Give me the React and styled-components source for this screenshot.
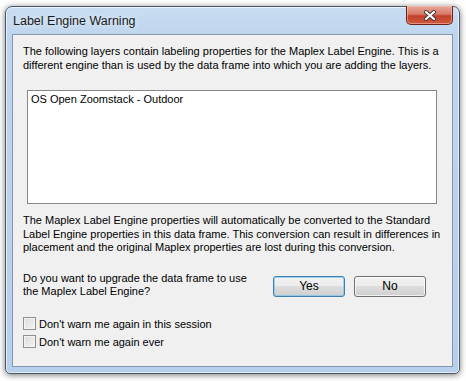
import styled, { createGlobalStyle } from "styled-components";

const GlobalStyle = createGlobalStyle`
  body {
    margin: 0;
    background: #ffffff;
    font-family: "Liberation Sans", Arial, sans-serif;
  }
`;

export default function App() {
  return (
    <>
      <GlobalStyle />
      <Page>
        <Window>
          <TitleBar>
            <Title>Label Engine Warning</Title>
            <CloseButton>
              <svg width="14" height="11" viewBox="0 0 14 11">
                <path
                  d="M3 2 L11 9 M11 2 L3 9"
                  stroke="#3b3b3b"
                  strokeWidth="4"
                  strokeLinecap="round"
                />
                <path
                  d="M3 2 L11 9 M11 2 L3 9"
                  stroke="#ffffff"
                  strokeWidth="2.2"
                  strokeLinecap="round"
                />
              </svg>
            </CloseButton>
          </TitleBar>

          <Client>
            <Message>
              The following layers contain labeling properties for the Maplex Label Engine. This is a
              <br />
              different engine than is used by the data frame into which you are adding the layers.
            </Message>

            <LayerList>
              <LayerItem>OS Open Zoomstack - Outdoor</LayerItem>
            </LayerList>

            <Message>
              The Maplex Label Engine properties will automatically be converted to the Standard
              <br />
              Label Engine properties in this data frame. This conversion can result in differences in
              <br />
              placement and the original Maplex properties are lost during this conversion.
            </Message>

            <QuestionRow>
              <Message>
                Do you want to upgrade the data frame to use
                <br />
                the Maplex Label Engine?
              </Message>
              <Buttons>
                <Button $default>Yes</Button>
                <Button>No</Button>
              </Buttons>
            </QuestionRow>

            <Checks>
              <CheckRow>
                <CheckBox />
                Don't warn me again in this session
              </CheckRow>
              <CheckRow>
                <CheckBox />
                Don't warn me again ever
              </CheckRow>
            </Checks>
          </Client>
        </Window>
      </Page>
    </>
  );
}

const Page = styled.div`
  width: 466px;
  height: 381px;
  padding: 6px 0 0 5px;
  box-sizing: border-box;
`;

const Window = styled.div`
  width: 455px;
  height: 368px;
  box-sizing: border-box;
  display: flex;
  flex-direction: column;
  padding: 0 6px 6px 6px;
  border: 1px solid #4a5868;
  border-radius: 7px 7px 5px 5px;
  background: linear-gradient(
    to bottom,
    #c9ddf2 0px,
    #bed5ee 30px,
    #b6cfea 100%
  );
  box-shadow: 0 1px 6px rgba(0, 0, 0, 0.55), inset 0 0 0 1px rgba(255, 255, 255, 0.6);
`;

const TitleBar = styled.div`
  height: 27px;
  display: flex;
  justify-content: space-between;
  align-items: flex-start;
  padding-left: 1px;
`;

const Title = styled.div`
  font-size: 12.5px;
  color: #1a1a1a;
  line-height: 28px;
  text-shadow: 0 0 6px rgba(255, 255, 255, 0.9);
`;

const CloseButton = styled.div`
  width: 47px;
  height: 19px;
  box-sizing: border-box;
  margin-top: -1px;
  display: flex;
  align-items: center;
  justify-content: center;
  border: 1px solid #6b2419;
  border-top: none;
  border-radius: 0 0 5px 5px;
  background: linear-gradient(
    to bottom,
    #e9a899 0%,
    #d97b68 45%,
    #c2402a 55%,
    #cf5a3d 100%
  );
  box-shadow: inset 0 0 0 1px rgba(255, 200, 190, 0.5);
`;

const Client = styled.div`
  flex: 1;
  display: flex;
  flex-direction: column;
  background: #f0f0f0;
  border: 1px solid #8497b0;
  padding: 10px 15px 0 10px;
  font-size: 11px;
  color: #000;
`;

const Message = styled.div`
  line-height: 13.5px;
  white-space: nowrap;
`;

const LayerList = styled.div`
  margin: 18px 0 10px 4px;
  height: 114px;
  box-sizing: border-box;
  background: #fff;
  border: 1px solid #828790;
  padding: 2px 3px;
`;

const LayerItem = styled.div`
  line-height: 13.5px;
`;

const QuestionRow = styled.div`
  margin-top: 17px;
  display: flex;
  align-items: flex-start;
`;

const Buttons = styled.div`
  margin-left: auto;
  margin-right: 11px;
  margin-top: 4px;
  display: flex;
  gap: 9px;
`;

const Button = styled.div`
  width: 72px;
  height: 21px;
  box-sizing: border-box;
  display: flex;
  align-items: center;
  justify-content: center;
  font-size: 12px;
  border-radius: 3px;
  border: 1px solid ${(p) => (p.$default ? "#3c7fb1" : "#707070")};
  background: linear-gradient(
    to bottom,
    #f2f2f2 0%,
    #ebebeb 50%,
    #dddddd 50%,
    #cfcfcf 100%
  );
  box-shadow: inset 0 0 0 1px
    ${(p) => (p.$default ? "rgba(120, 200, 240, 0.7)" : "rgba(255, 255, 255, 0.7)")};
`;

const Checks = styled.div`
  margin-top: 16px;
  display: flex;
  flex-direction: column;
`;

const CheckRow = styled.div`
  height: 18px;
  display: flex;
  align-items: center;
  gap: 3px;
  font-size: 11px;
`;

const CheckBox = styled.span`
  width: 13px;
  height: 13px;
  box-sizing: border-box;
  border: 1px solid #8e8f8f;
  background: linear-gradient(135deg, #dcdcdc 0%, #f4f4f4 100%);
  box-shadow: inset 0 0 0 1px #f4f4f4;
`;
